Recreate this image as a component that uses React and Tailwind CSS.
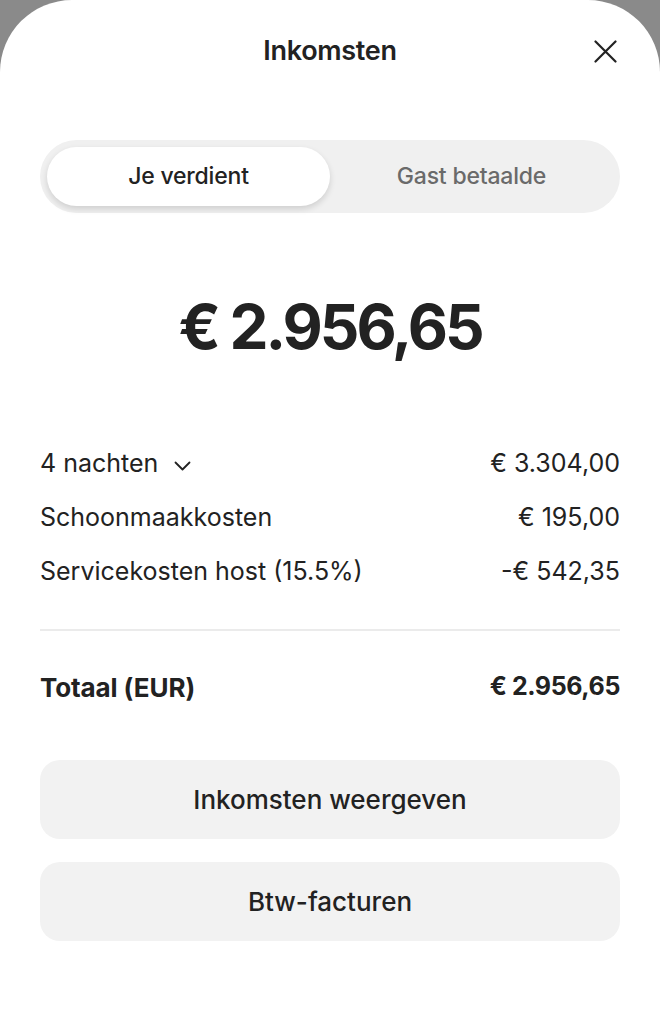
export default function App() {
  const rows = [
    { label: "Schoonmaakkosten", value: "€ 195,00" },
    { label: "Servicekosten host (15.5%)", value: "-€ 542,35" },
  ];

  return (
    <main
      className="w-[660px] h-[1035px] bg-[#8a8a8a] text-[#222222]"
      style={{ fontFamily: "Inter, 'Noto Sans', sans-serif" }}
    >
      <div className="h-full bg-white rounded-t-[72px] flex flex-col px-10">
        {/* header */}
        <header className="relative h-[102px] flex items-center justify-center">
          <h1 className="text-[27px] font-semibold tracking-[-0.3px]">Inkomsten</h1>
          <button className="absolute right-[3px] top-[40px] text-[#222222]">
            <svg width="23" height="23" viewBox="0 0 23 23" fill="none" stroke="currentColor" strokeWidth="2.2" strokeLinecap="round">
              <path d="M1.5 1.5L21.5 21.5M21.5 1.5L1.5 21.5" />
            </svg>
          </button>
        </header>

        {/* segmented control */}
        <div className="mt-[38px] h-[73px] rounded-full bg-[#f0f0f0] p-[7px] flex">
          <div className="w-[283px] rounded-full bg-white shadow-[0_3px_6px_rgba(0,0,0,0.14)] flex items-center justify-center text-[23px] font-medium tracking-[-0.2px]">
            Je verdient
          </div>
          <div className="flex-1 flex items-center justify-center text-[23px] font-medium tracking-[-0.2px] text-[#6a6a6a]">
            Gast betaalde
          </div>
        </div>

        {/* big amount */}
        <div className="mt-[74px] h-[78px] flex items-center justify-center text-[62px] font-bold tracking-[-3px]">
          € 2.956,65
        </div>

        {/* breakdown */}
        <div className="mt-[72px] flex flex-col text-[25px]">
          <div className="h-[54px] flex items-center justify-between">
            <span className="flex items-center gap-[16px]">
              4 nachten
              <svg width="17" height="10" viewBox="0 0 17 10" fill="none" stroke="currentColor" strokeWidth="1.8" strokeLinecap="round" strokeLinejoin="round" className="mt-[4px]">
                <path d="M1.5 1.5L8.5 8.5L15.5 1.5" />
              </svg>
            </span>
            <span>€ 3.304,00</span>
          </div>
          {rows.map((r) => (
            <div key={r.label} className="h-[54px] flex items-center justify-between">
              <span>{r.label}</span>
              <span>{r.value}</span>
            </div>
          ))}
        </div>

        <div className="mt-[30px] h-[2px] bg-[#ebebeb]" />

        <div className="mt-[36px] flex items-center justify-between font-bold h-[40px]">
          <span className="text-[26px] tracking-[-0.1px]">Totaal (EUR)</span>
          <span className="text-[25px] tracking-[-0.4px]">€ 2.956,65</span>
        </div>

        {/* actions */}
        <div className="mt-[53px] flex flex-col gap-[23px]">
          <button className="h-[79px] rounded-[20px] bg-[#f2f2f2] text-[26px] font-medium">
            Inkomsten weergeven
          </button>
          <button className="h-[79px] rounded-[20px] bg-[#f2f2f2] text-[26px] font-medium">
            Btw-facturen
          </button>
        </div>
      </div>
    </main>
  );
}
